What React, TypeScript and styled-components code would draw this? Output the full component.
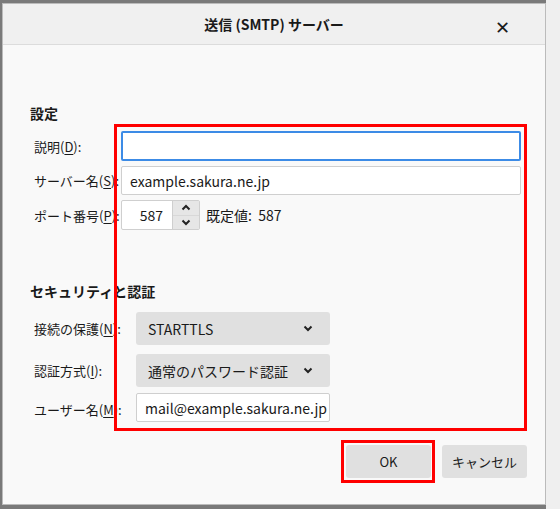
import React from "react";
import styled, { createGlobalStyle } from "styled-components";

const G = createGlobalStyle`
  html,body{margin:0;padding:0;width:560px;height:509px;overflow:hidden;
    background:#7a7a7a;font-family:"Segoe UI","Noto Sans CJK JP","Noto Sans",sans-serif;color:#1a1a1a;}
`;
const Page = styled.div`position:relative;width:560px;height:509px;`;
const Back = styled.div`position:absolute;left:546px;top:0;width:14px;height:509px;background:#efefef;`;
const Dialog = styled.div`position:absolute;left:3px;top:4px;width:542px;height:500px;background:#f9f9f9;
  box-shadow:0 0 0 1px #bbb;display:flex;flex-direction:column;`;
const Title = styled.div`height:40px;background:#f0f0f0;border-bottom:1px solid #dcdcdc;display:flex;align-items:center;justify-content:center;position:relative;font-size:14px;font-weight:bold;`;
const Close = styled.span`position:absolute;right:35px;top:9px;font-size:18px;font-weight:normal;`;
const Body = styled.div`padding:58px 22px 0 27px;display:flex;flex-direction:column;`;
const H = styled.div`font-size:14px;font-weight:bold;height:20px;`;
const Grid = styled.div<{ $lw: number; $gap: number }>`display:grid;grid-template-columns:${p => p.$lw}px auto;row-gap:${p => p.$gap}px;align-items:center;margin-left:4px;`;
const Label = styled.span`font-size:13px;white-space:nowrap;u{text-underline-offset:2px;}`;
const Input = styled.div<{ $focus?: boolean; $w?: number }>`width:${p => (p.$w ? p.$w : 400)}px;background:#fff;
  border:${p => (p.$focus ? "2px solid #3c8be6" : "1px solid #cfcfcf")};border-radius:2px;
  display:flex;align-items:center;padding-left:8px;box-sizing:border-box;height:${p => (p.$focus ? 30 : 29)}px;font-size:14px;`;
const PortRow = styled.div`display:flex;align-items:center;gap:6px;font-size:14px;`;
const Port = styled.div`width:79px;height:30px;box-sizing:border-box;border:1px solid #cfcfcf;background:#fff;border-radius:2px;display:flex;align-items:center;`;
const PortVal = styled.span`flex:1;text-align:right;padding-right:9px;`;
const Spin = styled.div`width:26px;height:28px;background:#e6e6e6;border-left:1px solid #cfcfcf;display:flex;flex-direction:column;`;
const SpinB = styled.div`flex:1;display:flex;align-items:center;justify-content:center;border-bottom:1px solid #d8d8d8;&:last-child{border:none;}`;
const Select = styled.div`width:194px;height:33px;background:#e0e0e0;border-radius:3px;display:flex;align-items:center;justify-content:space-between;padding:0 17px 0 12px;box-sizing:border-box;font-size:14px;`;
const Footer = styled.div`margin-top:auto;display:flex;justify-content:flex-end;gap:11px;padding:0 18px 26px 0;`;
const Btn = styled.div`width:85px;height:33px;background:#e0e0e0;border-radius:3px;display:flex;align-items:center;justify-content:center;font-size:13px;`;
const Mark = styled.div<{ $l: number; $t: number; $w: number; $h: number }>`position:absolute;left:${p => p.$l}px;top:${p => p.$t}px;width:${p => p.$w}px;height:${p => p.$h}px;border:3px solid #f00;box-sizing:border-box;pointer-events:none;`;

const Chev = ({ up }: { up?: boolean }) => (
  <svg width="10" height="7" viewBox="0 0 10 7"><path d={up ? "M1.5 5.5 5 2 8.5 5.5" : "M1.5 1.5 5 5 8.5 1.5"} fill="none" stroke="#222" strokeWidth="2" /></svg>
);

export default function App() {
  return (
    <Page>
      <G />
      <Back />
      <Dialog>
        <Title>送信 (SMTP) サーバー<Close>✕</Close></Title>
        <Body>
          <H>設定</H>
          <Grid $lw={87} $gap={5} style={{ marginTop: 8 }}>
            <Label>説明(<u>D</u>):</Label><Input $focus />
            <Label>サーバー名(<u>S</u>):</Label><Input>example.sakura.ne.jp</Input>
            <Label>ポート番号(<u>P</u>):</Label>
            <PortRow><Port><PortVal>587</PortVal><Spin><SpinB><Chev up /></SpinB><SpinB><Chev /></SpinB></Spin></Port>既定値:&nbsp; 587</PortRow>
          </Grid>
          <H style={{ marginTop: 51 }}>セキュリティと認証</H>
          <Grid $lw={102} $gap={9} style={{ marginTop: 11 }}>
            <Label>接続の保護(<u>N</u>):</Label><Select>STARTTLS<Chev /></Select>
            <Label>認証方式(<u>I</u>):</Label><Select>通常のパスワード認証<Chev /></Select>
            <Label>ユーザー名(<u>M</u>):</Label><Input $w={194} style={{ marginTop: -3 }}>mail@example.sakura.ne.jp</Input>
          </Grid>
        </Body>
        <Footer><Btn>OK</Btn><Btn>キャンセル</Btn></Footer>
      </Dialog>
      <Mark $l={114} $t={124} $w={413} $h={307} />
      <Mark $l={341} $t={440} $w={94} $h={43} />
    </Page>
  );
}
